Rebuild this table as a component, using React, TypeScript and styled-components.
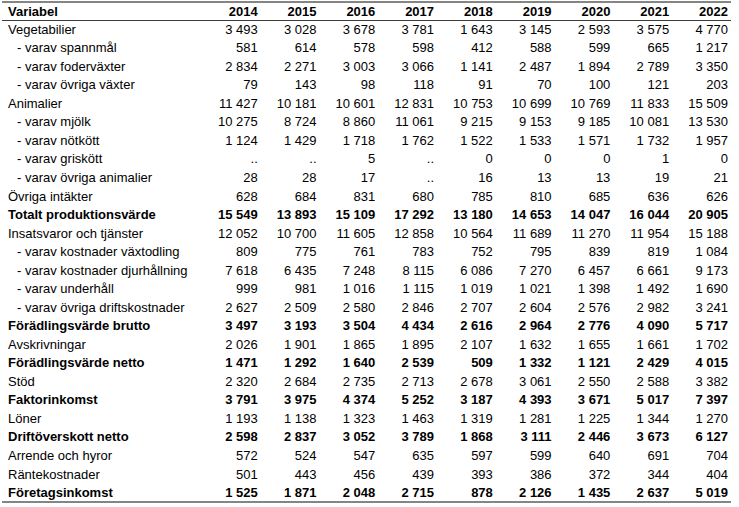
import React from 'react';
import styled, { createGlobalStyle } from 'styled-components';

const GlobalStyle = createGlobalStyle`
  html, body {
    margin: 0;
    padding: 0;
    background: #ffffff;
  }
`;

const years = ['2014', '2015', '2016', '2017', '2018', '2019', '2020', '2021', '2022'];

type Row = {
  label: string;
  values: string[];
  sub?: boolean;
  bold?: boolean;
};

const rows: Row[] = [
  { label: 'Vegetabilier', values: ['3 493', '3 028', '3 678', '3 781', '1 643', '3 145', '2 593', '3 575', '4 770'] },
  { label: '- varav spannmål', sub: true, values: ['581', '614', '578', '598', '412', '588', '599', '665', '1 217'] },
  { label: '- varav foderväxter', sub: true, values: ['2 834', '2 271', '3 003', '3 066', '1 141', '2 487', '1 894', '2 789', '3 350'] },
  { label: '- varav övriga växter', sub: true, values: ['79', '143', '98', '118', '91', '70', '100', '121', '203'] },
  { label: 'Animalier', values: ['11 427', '10 181', '10 601', '12 831', '10 753', '10 699', '10 769', '11 833', '15 509'] },
  { label: '- varav mjölk', sub: true, values: ['10 275', '8 724', '8 860', '11 061', '9 215', '9 153', '9 185', '10 081', '13 530'] },
  { label: '- varav nötkött', sub: true, values: ['1 124', '1 429', '1 718', '1 762', '1 522', '1 533', '1 571', '1 732', '1 957'] },
  { label: '- varav griskött', sub: true, values: ['..', '..', '5', '..', '0', '0', '0', '1', '0'] },
  { label: '- varav övriga animalier', sub: true, values: ['28', '28', '17', '..', '16', '13', '13', '19', '21'] },
  { label: 'Övriga intäkter', values: ['628', '684', '831', '680', '785', '810', '685', '636', '626'] },
  { label: 'Totalt produktionsvärde', bold: true, values: ['15 549', '13 893', '15 109', '17 292', '13 180', '14 653', '14 047', '16 044', '20 905'] },
  { label: 'Insatsvaror och tjänster', values: ['12 052', '10 700', '11 605', '12 858', '10 564', '11 689', '11 270', '11 954', '15 188'] },
  { label: '- varav kostnader växtodling', sub: true, values: ['809', '775', '761', '783', '752', '795', '839', '819', '1 084'] },
  { label: '- varav kostnader djurhållning', sub: true, values: ['7 618', '6 435', '7 248', '8 115', '6 086', '7 270', '6 457', '6 661', '9 173'] },
  { label: '- varav underhåll', sub: true, values: ['999', '981', '1 016', '1 115', '1 019', '1 021', '1 398', '1 492', '1 690'] },
  { label: '- varav övriga driftskostnader', sub: true, values: ['2 627', '2 509', '2 580', '2 846', '2 707', '2 604', '2 576', '2 982', '3 241'] },
  { label: 'Förädlingsvärde brutto', bold: true, values: ['3 497', '3 193', '3 504', '4 434', '2 616', '2 964', '2 776', '4 090', '5 717'] },
  { label: 'Avskrivningar', values: ['2 026', '1 901', '1 865', '1 895', '2 107', '1 632', '1 655', '1 661', '1 702'] },
  { label: 'Förädlingsvärde netto', bold: true, values: ['1 471', '1 292', '1 640', '2 539', '509', '1 332', '1 121', '2 429', '4 015'] },
  { label: 'Stöd', values: ['2 320', '2 684', '2 735', '2 713', '2 678', '3 061', '2 550', '2 588', '3 382'] },
  { label: 'Faktorinkomst', bold: true, values: ['3 791', '3 975', '4 374', '5 252', '3 187', '4 393', '3 671', '5 017', '7 397'] },
  { label: 'Löner', values: ['1 193', '1 138', '1 323', '1 463', '1 319', '1 281', '1 225', '1 344', '1 270'] },
  { label: 'Driftöverskott netto', bold: true, values: ['2 598', '2 837', '3 052', '3 789', '1 868', '3 111', '2 446', '3 673', '6 127'] },
  { label: 'Arrende och hyror', values: ['572', '524', '547', '635', '597', '599', '640', '691', '704'] },
  { label: 'Räntekostnader', values: ['501', '443', '456', '439', '393', '386', '372', '344', '404'] },
  { label: 'Företagsinkomst', bold: true, values: ['1 525', '1 871', '2 048', '2 715', '878', '2 126', '1 435', '2 637', '5 019'] },
];

const Sheet = styled.table`
  margin: 1px 0 0 2px;
  width: 729px;
  border-collapse: collapse;
  table-layout: fixed;
  border-top: 2px solid #858585;
  border-bottom: 2px solid #858585;
  font-family: 'Liberation Sans', Arial, sans-serif;
  font-size: 13px;
  color: #000000;
`;

const LabelCol = styled.col`
  width: 200px;
`;

const HeadCell = styled.th<{ $label?: boolean }>`
  height: 17px;
  padding: 0 3px 0 ${p => (p.$label ? '6px' : '0')};
  line-height: 14px;
  font-weight: 700;
  text-align: ${p => (p.$label ? 'left' : 'right')};
  vertical-align: middle;
  border-bottom: 1px solid #3c3c3c;
  white-space: nowrap;
`;

const BodyRow = styled.tr<{ $bold?: boolean }>`
  height: 18.54px;
  font-weight: ${p => (p.$bold ? 700 : 400)};
`;

const LabelCell = styled.td<{ $sub?: boolean }>`
  padding: 0 0 0 ${p => (p.$sub ? '15px' : '6px')};
  line-height: 14px;
  text-align: left;
  vertical-align: middle;
  white-space: nowrap;
`;

const NumCell = styled.td`
  padding: 0 3px 0 0;
  line-height: 14px;
  text-align: right;
  vertical-align: middle;
  white-space: nowrap;
`;

export default function App() {
  return (
    <>
      <GlobalStyle />
      <Sheet>
        <colgroup>
          <LabelCol />
          {years.map(y => (
            <col key={y} />
          ))}
        </colgroup>
        <thead>
          <tr>
            <HeadCell $label>Variabel</HeadCell>
            {years.map(y => (
              <HeadCell key={y}>{y}</HeadCell>
            ))}
          </tr>
        </thead>
        <tbody>
          {rows.map(r => (
            <BodyRow key={r.label} $bold={r.bold}>
              <LabelCell $sub={r.sub}>{r.label}</LabelCell>
              {r.values.map((v, i) => (
                <NumCell key={i}>{v}</NumCell>
              ))}
            </BodyRow>
          ))}
        </tbody>
      </Sheet>
    </>
  );
}
